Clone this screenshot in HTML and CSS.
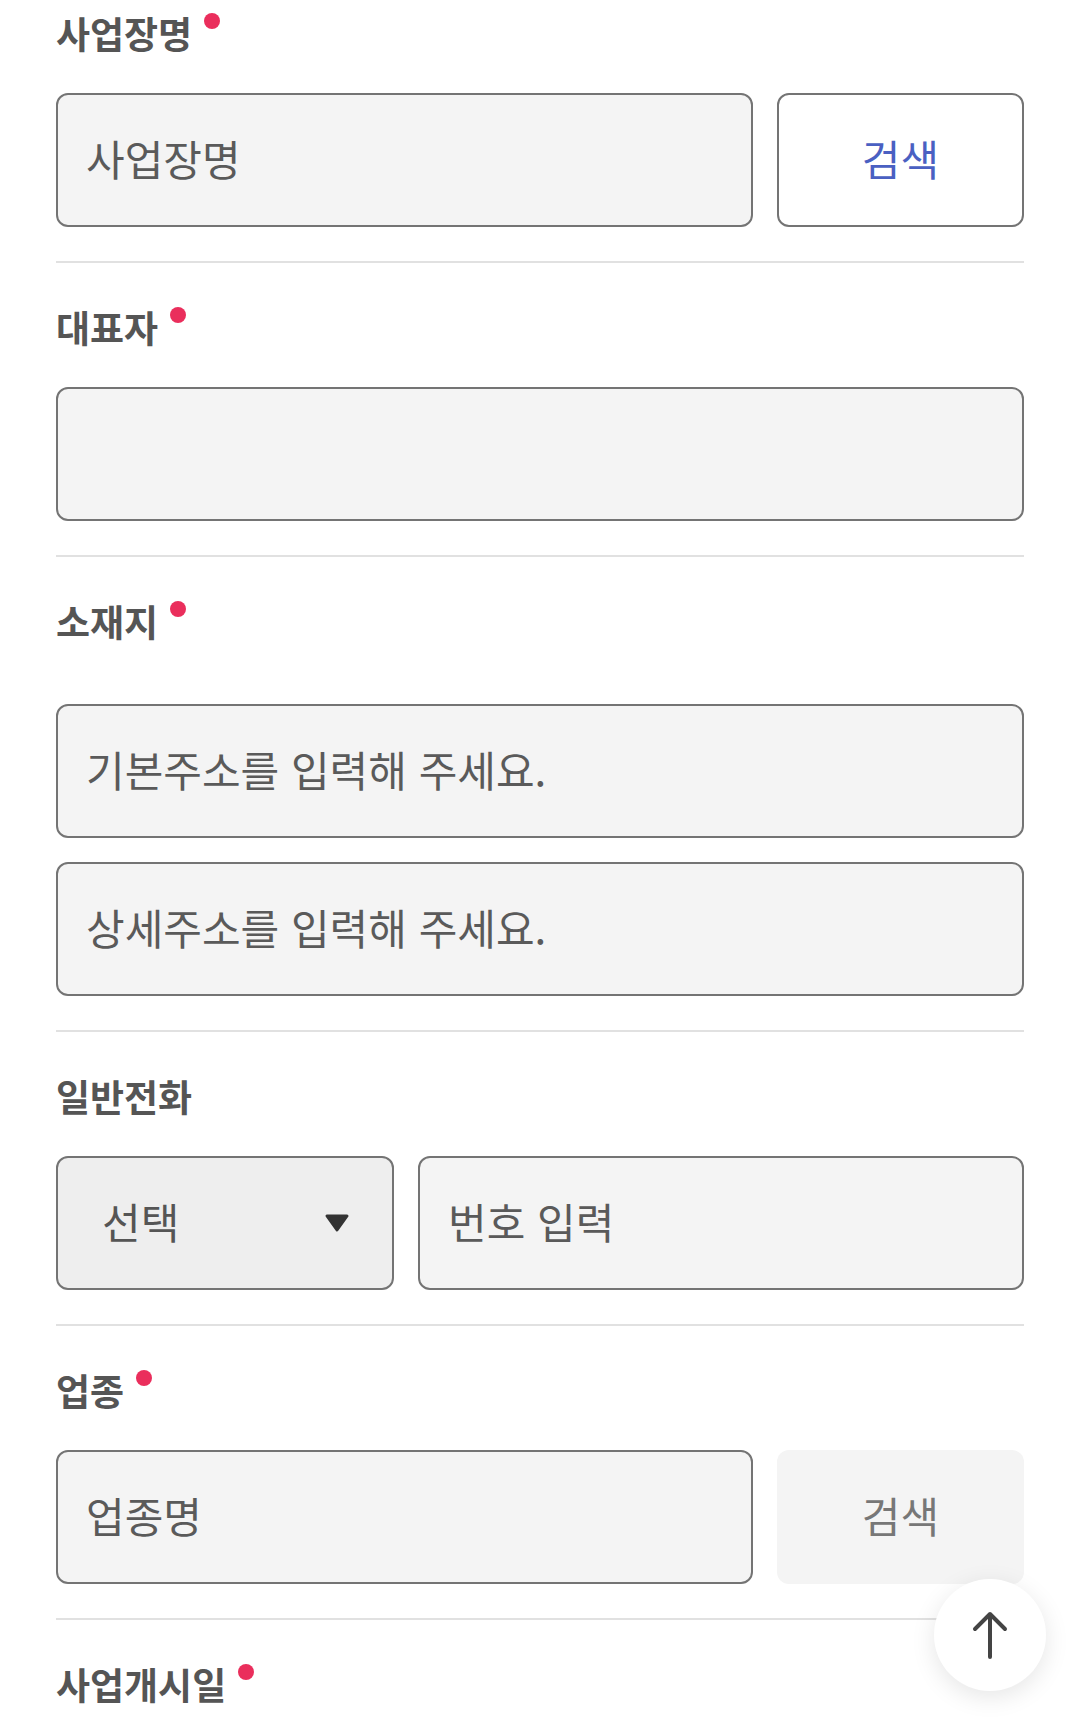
FILE: index.html
```html
<!DOCTYPE html>
<html lang="ko">
<head>
<meta charset="utf-8">
<title>사업장 정보</title>
<link rel="stylesheet" href="styles.css">
</head>
<body>
<form class="form">
  <section class="field field--first">
    <div class="label">사업장명<span class="req"></span></div>
    <div class="row">
      <input class="input grow" type="text" placeholder="사업장명">
      <button type="button" class="btn btn--active">검색</button>
    </div>
  </section>

  <section class="field">
    <div class="label">대표자<span class="req"></span></div>
    <div class="row">
      <input class="input grow" type="text">
    </div>
  </section>

  <section class="field field--address">
    <div class="label">소재지<span class="req"></span></div>
    <div class="stack">
      <input class="input" type="text" placeholder="기본주소를 입력해 주세요.">
      <input class="input" type="text" placeholder="상세주소를 입력해 주세요.">
    </div>
  </section>

  <section class="field">
    <div class="label">일반전화</div>
    <div class="row">
      <div class="select">
        <span>선택</span>
        <svg class="caret" width="26" height="20" viewBox="0 0 26 20" aria-hidden="true">
          <path d="M3 3 H23 L13 17 Z" fill="#333" stroke="#333" stroke-width="3" stroke-linejoin="round"/>
        </svg>
      </div>
      <input class="input grow" type="text" placeholder="번호 입력">
    </div>
  </section>

  <section class="field">
    <div class="label">업종<span class="req"></span></div>
    <div class="row">
      <input class="input grow" type="text" placeholder="업종명">
      <button type="button" class="btn btn--disabled">검색</button>
    </div>
  </section>

  <section class="field field--last">
    <div class="label">사업개시일<span class="req"></span></div>
  </section>
</form>

<button type="button" class="to-top" aria-label="맨 위로">
  <svg width="112" height="112" viewBox="0 0 112 112" aria-hidden="true">
    <path d="M56 78 V35 M41 50 L56 35 L71 50" fill="none" stroke="#444" stroke-width="4" stroke-linecap="round" stroke-linejoin="round"/>
  </svg>
</button>
</body>
</html>
```

FILE: styles.css
```css
html, body {
  margin: 0;
  padding: 0;
  background: #ffffff;
}

body {
  font-family: "Noto Sans CJK KR", "Noto Sans", sans-serif;
  color: #555555;
  overflow: hidden;
}

.form {
  padding: 0 56px;
}

.field {
  padding: 42px 0 34px;
  border-bottom: 2px solid #e1e1e1;
}

.field--first {
  padding-top: 11px;
}

.field--last {
  border-bottom: none;
}

.label {
  height: 44px;
  line-height: 44px;
  font-size: 37px;
  font-weight: 700;
  color: #555555;
  letter-spacing: 0;
  margin-bottom: 38px;
  white-space: nowrap;
}

.field--address .label {
  margin-bottom: 61px;
}

.req {
  display: inline-block;
  width: 16px;
  height: 16px;
  border-radius: 50%;
  background: #ea2e5c;
  vertical-align: top;
  margin-top: 2px;
  margin-left: 12px;
}

.row {
  display: flex;
  gap: 24px;
}

.stack {
  display: flex;
  flex-direction: column;
  gap: 24px;
}

.grow {
  flex: 1;
  min-width: 0;
}

.input {
  box-sizing: border-box;
  height: 134px;
  margin: 0;
  padding: 0 28px 5px;
  border: 2px solid #747474;
  border-radius: 12px;
  background: #f4f4f4;
  font-family: inherit;
  font-size: 42px;
  letter-spacing: 0;
  color: #555555;
  outline: none;
}

.input::placeholder {
  color: #5a5a5a;
  opacity: 1;
}

.btn {
  box-sizing: border-box;
  flex: 0 0 247px;
  height: 134px;
  margin: 0;
  padding: 0 0 5px;
  border-radius: 12px;
  font-family: inherit;
  font-size: 42px;
  letter-spacing: 0;
  cursor: pointer;
}

.btn--active {
  background: #ffffff;
  border: 2px solid #747474;
  color: #4a60c2;
}

.btn--disabled {
  background: #f4f4f4;
  border: none;
  color: #777777;
}

.select {
  box-sizing: border-box;
  flex: 0 0 338px;
  height: 134px;
  display: flex;
  align-items: center;
  justify-content: space-between;
  padding: 0 42px 0 44px;
  border: 2px solid #747474;
  border-radius: 12px;
  background: #eeeeee;
  font-size: 42px;
  letter-spacing: 0;
  color: #555555;
}

.select span {
  padding-bottom: 5px;
}

.caret {
  display: block;
}

.to-top {
  position: fixed;
  right: 34px;
  bottom: 42px;
  width: 112px;
  height: 112px;
  padding: 0;
  border: none;
  border-radius: 50%;
  background: #ffffff;
  box-shadow: 0 6px 24px rgba(0, 0, 0, 0.10);
  cursor: pointer;
}

.to-top svg {
  display: block;
}
```
